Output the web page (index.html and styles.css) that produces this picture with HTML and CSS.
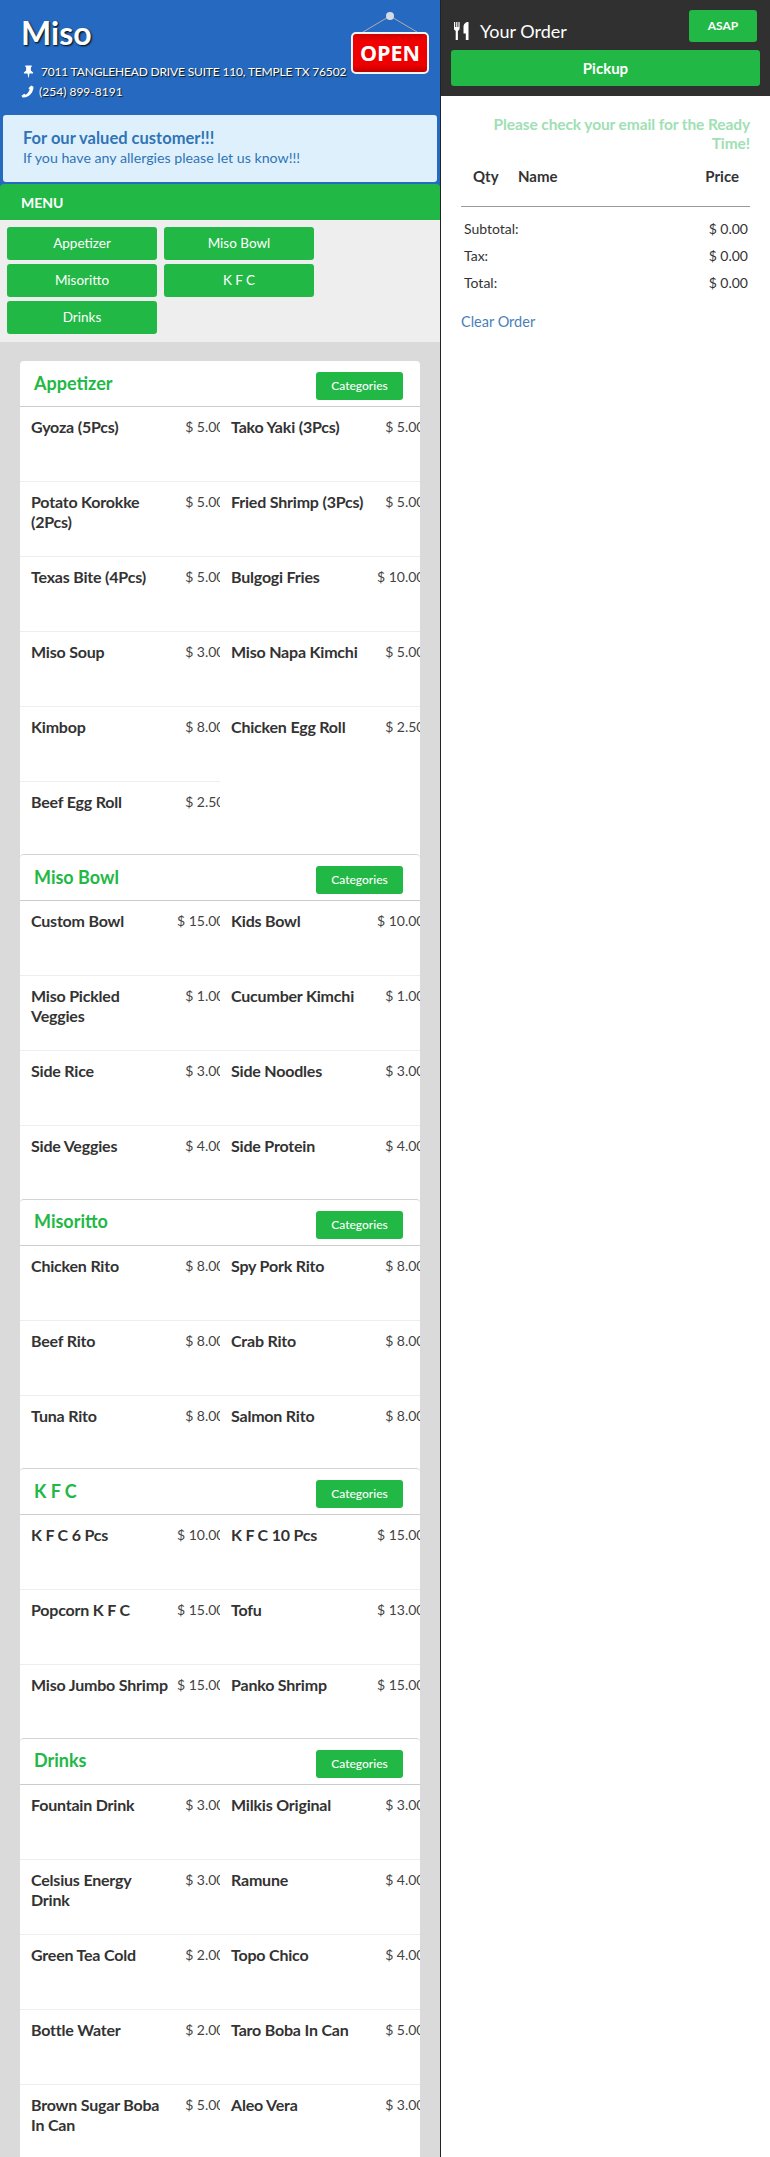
FILE: index.html
```html
<!DOCTYPE html>
<html>

<head>
  <title>Miso</title>
  <link rel="stylesheet" href="styles.css">
</head>

<body>
  <div class="page">
    <div class="left">
      <div class="hero">
        <div class="hero-top">
          <div class="hero-info">
            <h1>Miso</h1>
            <p class="address">
              <svg class="icon-pin" viewBox="0 0 12 14"><path d="M2.500 .5h7v1.200L8.600 2.400v3.400L11 8.100v1.100H7L6.300 13.500h-.6L5 9.200H1V8.100l2.400-2.300V2.400L2.500 1.700z" fill="#fff"/></svg>
              7011 TANGLEHEAD DRIVE SUITE 110, TEMPLE TX 76502
            </p>
            <p class="phone">
              <svg class="icon-phone" viewBox="0 0 14 14"><path d="M11 .6l2.400 1.200c.3 5.600-4.400 11.400-10.600 11.700C1.700 13.500.9 12.800.6 11.600l2.900-2.200 1.500 1.100C7.200 9.200 8.800 7 9.300 4.600L7.900 3.500z" fill="#fff"/></svg>
              (254) 899-8191
            </p>
          </div>
          <svg class="open-sign" viewBox="0 0 78 64">
            <defs>
              <linearGradient id="sign-red" x1="0" y1="0" x2="0" y2="1">
                <stop offset="0" stop-color="#c80000"/>
                <stop offset=".2" stop-color="#f00000"/>
                <stop offset=".8" stop-color="#ee0000"/>
                <stop offset="1" stop-color="#b80000"/>
              </linearGradient>
            </defs>
            <path d="M12 21L39 5L66 21" fill="none" stroke="#b5aca4" stroke-width="1"/>
            <circle cx="39" cy="5" r="4" fill="#d5dbe6"/>
            <rect x="1" y="22" width="76" height="40" rx="4" fill="url(#sign-red)" stroke="#f4f4f4" stroke-width="2"/>
            <text x="39" y="50" class="open-text" text-anchor="middle">OPEN</text>
          </svg>
        </div>
        <div class="notice">
          <strong>For our valued customer!!!</strong>
          <span>If you have any allergies please let us know!!!</span>
        </div>
        <div class="menu-title">MENU</div>
      </div>
      <div class="cat-nav">
        <a class="cat-btn">Appetizer</a>
        <a class="cat-btn">Miso Bowl</a>
        <a class="cat-btn">Misoritto</a>
        <a class="cat-btn">K F C</a>
        <a class="cat-btn">Drinks</a>
      </div>
      <div class="sections">
        <div class="card">
          <div class="section">
            <div class="section-head">
              <h2>Appetizer</h2>
              <a class="small-btn">Categories</a>
            </div>
            <div class="items">
              <div class="item"><div class="name">Gyoza (5Pcs)</div><div class="price">$ 5.00</div></div>
              <div class="item"><div class="name">Tako Yaki (3Pcs)</div><div class="price">$ 5.00</div></div>
              <div class="item"><div class="name">Potato Korokke (2Pcs)</div><div class="price">$ 5.00</div></div>
              <div class="item"><div class="name">Fried Shrimp (3Pcs)</div><div class="price">$ 5.00</div></div>
              <div class="item"><div class="name">Texas Bite (4Pcs)</div><div class="price">$ 5.00</div></div>
              <div class="item"><div class="name">Bulgogi Fries</div><div class="price">$ 10.00</div></div>
              <div class="item"><div class="name">Miso Soup</div><div class="price">$ 3.00</div></div>
              <div class="item"><div class="name">Miso Napa Kimchi</div><div class="price">$ 5.00</div></div>
              <div class="item"><div class="name">Kimbop</div><div class="price">$ 8.00</div></div>
              <div class="item"><div class="name">Chicken Egg Roll</div><div class="price">$ 2.50</div></div>
              <div class="item"><div class="name">Beef Egg Roll</div><div class="price">$ 2.50</div></div>
            </div>
          </div>
          <div class="section">
            <div class="section-head">
              <h2>Miso Bowl</h2>
              <a class="small-btn">Categories</a>
            </div>
            <div class="items">
              <div class="item"><div class="name">Custom Bowl</div><div class="price">$ 15.00</div></div>
              <div class="item"><div class="name">Kids Bowl</div><div class="price">$ 10.00</div></div>
              <div class="item"><div class="name">Miso Pickled Veggies</div><div class="price">$ 1.00</div></div>
              <div class="item"><div class="name">Cucumber Kimchi</div><div class="price">$ 1.00</div></div>
              <div class="item"><div class="name">Side Rice</div><div class="price">$ 3.00</div></div>
              <div class="item"><div class="name">Side Noodles</div><div class="price">$ 3.00</div></div>
              <div class="item"><div class="name">Side Veggies</div><div class="price">$ 4.00</div></div>
              <div class="item"><div class="name">Side Protein</div><div class="price">$ 4.00</div></div>
            </div>
          </div>
          <div class="section">
            <div class="section-head">
              <h2>Misoritto</h2>
              <a class="small-btn">Categories</a>
            </div>
            <div class="items">
              <div class="item"><div class="name">Chicken Rito</div><div class="price">$ 8.00</div></div>
              <div class="item"><div class="name">Spy Pork Rito</div><div class="price">$ 8.00</div></div>
              <div class="item"><div class="name">Beef Rito</div><div class="price">$ 8.00</div></div>
              <div class="item"><div class="name">Crab Rito</div><div class="price">$ 8.00</div></div>
              <div class="item"><div class="name">Tuna Rito</div><div class="price">$ 8.00</div></div>
              <div class="item"><div class="name">Salmon Rito</div><div class="price">$ 8.00</div></div>
            </div>
          </div>
          <div class="section">
            <div class="section-head">
              <h2>K F C</h2>
              <a class="small-btn">Categories</a>
            </div>
            <div class="items">
              <div class="item"><div class="name">K F C 6 Pcs</div><div class="price">$ 10.00</div></div>
              <div class="item"><div class="name">K F C 10 Pcs</div><div class="price">$ 15.00</div></div>
              <div class="item"><div class="name">Popcorn K F C</div><div class="price">$ 15.00</div></div>
              <div class="item"><div class="name">Tofu</div><div class="price">$ 13.00</div></div>
              <div class="item"><div class="name">Miso Jumbo Shrimp</div><div class="price">$ 15.00</div></div>
              <div class="item"><div class="name">Panko Shrimp</div><div class="price">$ 15.00</div></div>
            </div>
          </div>
          <div class="section">
            <div class="section-head">
              <h2>Drinks</h2>
              <a class="small-btn">Categories</a>
            </div>
            <div class="items">
              <div class="item"><div class="name">Fountain Drink</div><div class="price">$ 3.00</div></div>
              <div class="item"><div class="name">Milkis Original</div><div class="price">$ 3.00</div></div>
              <div class="item"><div class="name">Celsius Energy Drink</div><div class="price">$ 3.00</div></div>
              <div class="item"><div class="name">Ramune</div><div class="price">$ 4.00</div></div>
              <div class="item"><div class="name">Green Tea Cold</div><div class="price">$ 2.00</div></div>
              <div class="item"><div class="name">Topo Chico</div><div class="price">$ 4.00</div></div>
              <div class="item"><div class="name">Bottle Water</div><div class="price">$ 2.00</div></div>
              <div class="item"><div class="name">Taro Boba In Can</div><div class="price">$ 5.00</div></div>
              <div class="item"><div class="name">Brown Sugar Boba In Can</div><div class="price">$ 5.00</div></div>
              <div class="item"><div class="name">Aleo Vera</div><div class="price">$ 3.00</div></div>
            </div>
          </div>
        </div>
      </div>
    </div>

    <div class="right">
      <div class="order-head">
        <div class="order-row">
          <div class="order-title">
            <svg class="icon-cutlery" viewBox="0 0 15 18"><path d="M0 0h1.200v5h1V0h1.200v5h1V0h1.200v6.500c0 1.200-.8 2-1.700 2.300V18H1.700V8.800C.8 8.500 0 7.700 0 6.500zM14.500 0v18h-2.700v-6.500H9.500V5c0-3 2-5 5-5z" fill="#fff"/></svg>
            Your Order
          </div>
          <a class="asap-btn">ASAP</a>
        </div>
        <a class="pickup-btn">Pickup</a>
      </div>
      <div class="order-body">
        <p class="ready-note">Please check your email for the Ready Time!</p>
        <div class="order-cols">
          <span class="col-qty">Qty</span>
          <span class="col-name">Name</span>
          <span class="col-price">Price</span>
        </div>
        <div class="totals">
          <div class="total-row"><span>Subtotal:</span><span>$ 0.00</span></div>
          <div class="total-row"><span>Tax:</span><span>$ 0.00</span></div>
          <div class="total-row"><span>Total:</span><span>$ 0.00</span></div>
        </div>
        <a class="clear-link">Clear Order</a>
      </div>
    </div>
  </div>
</body>

</html>
```

FILE: styles.css
```css
* {
  box-sizing: border-box;
  margin: 0;
  padding: 0;
}

html,
body {
  height: 2157px;
  overflow: hidden;
}

body {
  font-family: 'Lato', sans-serif;
  color: #333;
  background-color: #fff;
}

.page {
  display: flex;
  height: 2157px;
}

.left {
  width: 440px;
  flex-shrink: 0;
  overflow: hidden;
  background-color: #dadada;
}

.right {
  width: 330px;
  border-left: 1px solid #222;
  background-color: #fff;
}

.hero {
  height: 220px;
  padding-top: 1px;
  background-color: #256ac0;
  color: #fff;
}

.hero-top {
  display: flex;
  justify-content: space-between;
  height: 114px;
  padding: 13px 11px 0 21px;
}

h1 {
  font-size: 32px;
  font-weight: 700;
  line-height: 38px;
  margin-bottom: 10px;
  text-shadow: 1px 1px 2px #000;
}

.address,
.phone {
  font-size: 12px;
  line-height: 20px;
  text-shadow: 1px 1px 1px #111;
  white-space: nowrap;
}

.address {
  letter-spacing: -.17px;
}

.icon-pin {
  width: 11px;
  height: 13px;
  margin: 0 4px 0 2px;
  vertical-align: -2px;
}

.icon-phone {
  width: 13px;
  height: 13px;
  margin-right: 2px;
  vertical-align: -2px;
}

.open-sign {
  width: 78px;
  height: 64px;
  margin-top: -3px;
  flex-shrink: 0;
}

.open-text {
  font-family: 'Open Sans', sans-serif;
  font-size: 21.500px;
  font-weight: 700;
  fill: #fff;
}

.notice {
  display: flex;
  flex-direction: column;
  height: 67px;
  margin: 0 3px 2px;
  padding: 13px 20px;
  border-radius: 3px;
  background-color: #dff0fd;
  color: #2f74b5;
  font-size: 14.200px;
  line-height: 20px;
}

.notice strong {
  font-size: 16.500px;
}

.menu-title {
  height: 36px;
  padding-left: 21px;
  border-radius: 4px 4px 0 0;
  background-color: #22b845;
  color: #fff;
  font-size: 14px;
  font-weight: 700;
  line-height: 37px;
}

.cat-nav {
  display: flex;
  flex-wrap: wrap;
  align-content: flex-start;
  gap: 4px 7px;
  height: 122px;
  padding: 7px;
  background-color: #eee;
}

.cat-btn {
  display: block;
  width: 150px;
  height: 33px;
  border-radius: 3px;
  background-color: #22b845;
  color: #fff;
  font-size: 13.500px;
  line-height: 32px;
  text-align: center;
}

.sections {
  padding: 19px 20px 0;
}

.card {
  width: 400px;
  border-radius: 4px 4px 0 0;
  background-color: #fff;
}

.section {
  border-top: 1px solid #d4d4d4;
  border-radius: 4px 4px 0 0;
}

.section:first-child {
  border-top: none;
}

.section-head {
  display: flex;
  justify-content: space-between;
  align-items: center;
  height: 46px;
  padding: 0 17px 0 14px;
  border-bottom: 1px solid #ccc;
}

h2 {
  font-size: 18px;
  font-weight: 700;
  color: #22b845;
  line-height: 24px;
  margin-top: -2px;
}

.small-btn {
  display: block;
  width: 87px;
  height: 28px;
  margin-top: 5px;
  border-radius: 3px;
  background-color: #22b845;
  color: #fff;
  font-size: 12px;
  font-weight: 500;
  line-height: 28px;
  text-align: center;
}

.items {
  display: flex;
  flex-wrap: wrap;
  margin: -1px 0 -1.600px;
}

.item {
  display: flex;
  justify-content: space-between;
  width: 200px;
  height: 75px;
  padding: 10px 0 0 11px;
  overflow: hidden;
  border-top: 1px solid #eee;
  font-size: 16px;
  line-height: 20px;
}

/* first row sits on the head line, no rule of its own */
.item:nth-child(-n+2) {
  border-top-color: transparent;
}

.name {
  width: 140px;
  flex-shrink: 0;
  font-weight: 700;
  letter-spacing: -.2px;
}

/* price column runs past the cell, so the last digit gets clipped */
.price {
  flex-shrink: 0;
  margin-right: -4.500px;
  color: #444;
  font-size: 14px;
  white-space: nowrap;
}

.order-head {
  height: 96px;
  padding: 10px 10px 0;
  background-color: #303030;
}

.order-row {
  display: flex;
  justify-content: space-between;
  height: 40px;
}

.order-title {
  display: flex;
  align-items: center;
  gap: 11px;
  height: 40px;
  padding: 1px 0 0 3px;
  color: #fff;
  font-size: 18px;
}

.icon-cutlery {
  width: 15px;
  height: 18px;
}

.asap-btn {
  display: block;
  width: 68px;
  height: 32px;
  margin-right: 3px;
  border-radius: 3px;
  background-color: #22b845;
  color: #fff;
  font-size: 12px;
  font-weight: 700;
  line-height: 32px;
  text-align: center;
}

.pickup-btn {
  display: block;
  height: 36px;
  border-radius: 3px;
  background-color: #22b845;
  color: #fff;
  font-size: 15px;
  font-weight: 700;
  line-height: 36px;
  text-align: center;
}

.order-body {
  padding: 19px 20px 0;
}

.ready-note {
  color: #a0e0b4;
  font-size: 15.500px;
  font-weight: 700;
  letter-spacing: -.1px;
  line-height: 19px;
  text-align: right;
}

.order-cols {
  display: flex;
  height: 54px;
  padding-top: 13px;
  border-bottom: 1px solid #999;
  color: #333;
  font-size: 15px;
  font-weight: 700;
  line-height: 20px;
}

.col-qty {
  width: 57px;
  padding-left: 12px;
}

.col-name {
  flex: 1;
}

.col-price {
  padding-right: 11px;
}

.totals {
  padding: 8px 2px 0 3px;
}

.total-row {
  display: flex;
  justify-content: space-between;
  height: 27px;
  font-size: 14px;
  line-height: 27px;
}

.clear-link {
  display: block;
  margin-top: 16px;
  color: #4a7fb8;
  font-size: 14.500px;
  line-height: 20px;
}
```
